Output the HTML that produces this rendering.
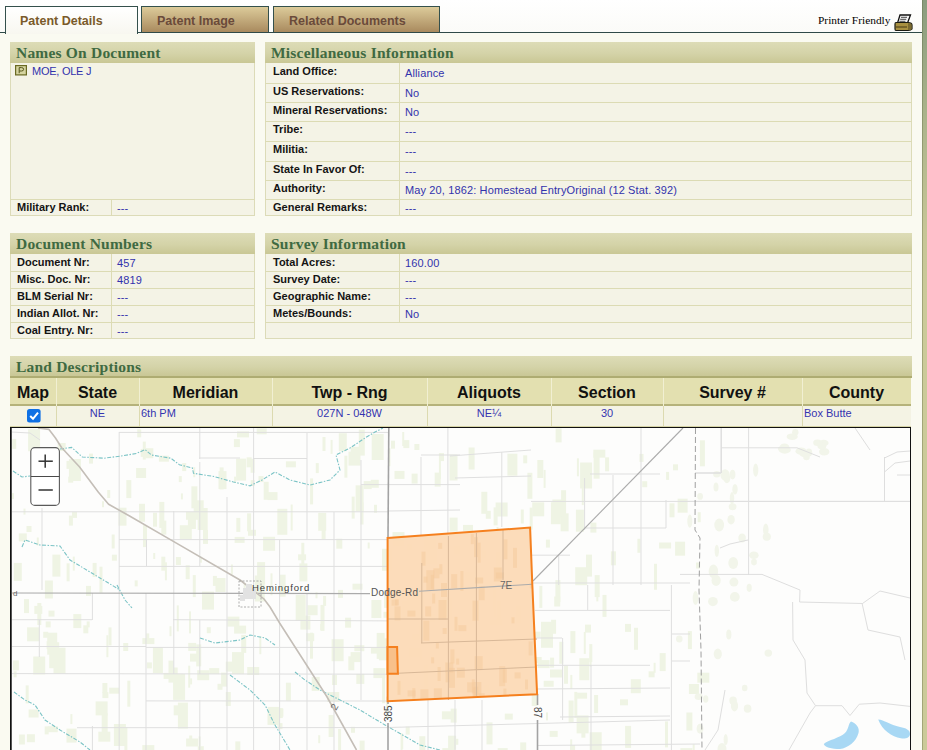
<!DOCTYPE html><html><head><meta charset="utf-8"><style>
*{margin:0;padding:0;box-sizing:border-box}
html,body{width:927px;height:750px;overflow:hidden}
body{background:#fafaf1;font-family:"Liberation Sans",sans-serif;position:relative}
.a{position:absolute;white-space:nowrap}
#top{left:0;top:0;width:922px;height:32px;background:linear-gradient(#ffffff,#fbfbf8)}
#tabline{left:0;top:32px;width:922px;height:1px;background:#2f4a48}
#rbar{left:922px;top:0;width:5px;height:750px;background:linear-gradient(#8a9c7e 0px,#a9b28a 110px,#c6c596 230px,#cbca99 300px,#cbca99);border-left:1px solid rgba(90,100,60,0.35)}
.tab{top:6px;border:1px solid #34504c;border-bottom:none;font-weight:bold;font-size:12.5px;line-height:13px;color:#6a4a3a;padding-top:8px}
.tab.act{background:linear-gradient(#ffffff,#f8f7f0);color:#7a5a2a;height:28px}
.tab.ina{background:linear-gradient(#dccb9a,#a98a5e);height:26px}
#pf{left:818px;top:14px;font-family:"Liberation Serif",serif;font-size:11.4px;line-height:12px;color:#000}
.hdr{height:21px;background:linear-gradient(#dddcb7,#d4d3a8 55%,#c9c795);font-family:"Liberation Serif",serif;font-weight:bold;font-size:15.5px;letter-spacing:0.2px;color:#3f6a42;padding:3px 0 0 6px;line-height:16px}
.bd{background:#f4f3e6;border:1px solid #dcdbb8;border-top:none}
.hl{height:1px;background:#dcdbb4}
.vl{width:1px;background:#dcdbb4}
.l{font-size:11px;line-height:11px;font-weight:bold;color:#141414}
.v{font-size:11px;line-height:11px;color:#3232ac;letter-spacing:0.13px}
.ch{font-size:16px;line-height:16px;font-weight:bold;color:#111;text-align:center}
.dv{font-size:11px;line-height:11px;color:#3434b0}
</style></head><body><div id="top" class="a"></div><div id="tabline" class="a"></div><div id="rbar" class="a"></div>
<div class="a tab act" style="left:5px;width:133px;padding-left:14px">Patent Details</div>
<div class="a tab ina" style="left:141px;width:128px;padding-left:15px">Patent Image</div>
<div class="a tab ina" style="left:273px;width:167px;padding-left:15px">Related Documents</div>
<div id="pf" class="a">Printer Friendly</div>
<svg class="a" style="left:893px;top:13px" width="21" height="19" viewBox="893 13 21 19"><path d="M900,15 L910.5,15 L907.5,23 L897.5,23 Z" fill="#f4f4f4" stroke="#111" stroke-width="1.3"/><g stroke="#333" stroke-width="0.9"><line x1="901" y1="17.3" x2="907" y2="17.3"/><line x1="900.2" y1="19.3" x2="906.2" y2="19.3"/><line x1="899.4" y1="21.3" x2="905.4" y2="21.3"/></g><path d="M896,22.5 L908,22.5 Q912,22.5 912,25 L912,29 Q911,30.5 908,30.5 L896,30.5 Q895,30.5 895,29 L895,24 Q895,22.5 896,22.5 Z" fill="#a89040" stroke="#1a1a10" stroke-width="1.2"/><line x1="896" y1="27" x2="907" y2="27" stroke="#3a3010" stroke-width="0.9"/><path d="M908,23 L911.5,24.5 L911.5,29.5 L908,30" fill="#7a6a30"/></svg>
<div class="a hdr" style="left:10px;top:42px;width:245px">Names On Document</div>
<div class="a bd" style="left:10px;top:63px;width:245px;height:153px"></div>
<svg class="a" style="left:15px;top:65px" width="12" height="11"><rect x="0.6" y="0.6" width="10.8" height="9.3" fill="#d5d4a0" stroke="#6a6a22" stroke-width="1.2"/><path d="M4.2,8.2 L4.2,2.6 L6.6,2.6 Q8.6,2.6 8.6,4.3 Q8.6,6 6.6,6 L4.4,6" fill="none" stroke="#55551a" stroke-width="1"/></svg>
<div class="a v" style="left:32px;top:66px;letter-spacing:-0.25px">MOE, OLE J</div>
<div class="a hl" style="left:10px;top:199px;width:245px"></div>
<div class="a vl" style="left:111px;top:200px;height:16px"></div>
<div class="a l" style="left:17px;top:202px;">Military Rank:</div>
<div class="a v" style="left:117px;top:203px;">---</div>
<div class="a hdr" style="left:265px;top:42px;width:647px">Miscellaneous Information</div>
<div class="a bd" style="left:265px;top:63px;width:647px;height:153px"></div>
<div class="a l" style="left:273px;top:66px;">Land Office:</div>
<div class="a v" style="left:405px;top:68px;">Alliance</div>
<div class="a hl" style="left:265px;top:83px;width:647px"></div>
<div class="a l" style="left:273px;top:86px;">US Reservations:</div>
<div class="a v" style="left:405px;top:88px;">No</div>
<div class="a hl" style="left:265px;top:102px;width:647px"></div>
<div class="a l" style="left:273px;top:105px;">Mineral Reservations:</div>
<div class="a v" style="left:405px;top:107px;">No</div>
<div class="a hl" style="left:265px;top:121px;width:647px"></div>
<div class="a l" style="left:273px;top:124px;">Tribe:</div>
<div class="a v" style="left:405px;top:126px;">---</div>
<div class="a hl" style="left:265px;top:141px;width:647px"></div>
<div class="a l" style="left:273px;top:144px;">Militia:</div>
<div class="a v" style="left:405px;top:146px;">---</div>
<div class="a hl" style="left:265px;top:161px;width:647px"></div>
<div class="a l" style="left:273px;top:164px;">State In Favor Of:</div>
<div class="a v" style="left:405px;top:166px;">---</div>
<div class="a hl" style="left:265px;top:180px;width:647px"></div>
<div class="a l" style="left:273px;top:183px;">Authority:</div>
<div class="a v" style="left:405px;top:185px;">May 20, 1862: Homestead EntryOriginal (12 Stat. 392)</div>
<div class="a hl" style="left:265px;top:199px;width:647px"></div>
<div class="a l" style="left:273px;top:202px;">General Remarks:</div>
<div class="a v" style="left:405px;top:203px;">---</div>
<div class="a vl" style="left:399px;top:63px;height:152px"></div>
<div class="a hdr" style="left:10px;top:233px;width:245px">Document Numbers</div>
<div class="a bd" style="left:10px;top:254px;width:245px;height:85px"></div>
<div class="a l" style="left:17px;top:257px;">Document Nr:</div>
<div class="a v" style="left:117px;top:258px;">457</div>
<div class="a hl" style="left:10px;top:271px;width:245px"></div>
<div class="a l" style="left:17px;top:274px;">Misc. Doc. Nr:</div>
<div class="a v" style="left:117px;top:275px;">4819</div>
<div class="a hl" style="left:10px;top:288px;width:245px"></div>
<div class="a l" style="left:17px;top:291px;">BLM Serial Nr:</div>
<div class="a v" style="left:117px;top:292px;">---</div>
<div class="a hl" style="left:10px;top:305px;width:245px"></div>
<div class="a l" style="left:17px;top:308px;">Indian Allot. Nr:</div>
<div class="a v" style="left:117px;top:309px;">---</div>
<div class="a hl" style="left:10px;top:322px;width:245px"></div>
<div class="a l" style="left:17px;top:325px;">Coal Entry. Nr:</div>
<div class="a v" style="left:117px;top:326px;">---</div>
<div class="a vl" style="left:111px;top:254px;height:84px"></div>
<div class="a hdr" style="left:265px;top:233px;width:647px">Survey Information</div>
<div class="a bd" style="left:265px;top:254px;width:647px;height:85px"></div>
<div class="a l" style="left:273px;top:257px;">Total Acres:</div>
<div class="a v" style="left:405px;top:258px;">160.00</div>
<div class="a hl" style="left:265px;top:271px;width:647px"></div>
<div class="a l" style="left:273px;top:274px;">Survey Date:</div>
<div class="a v" style="left:405px;top:275px;">---</div>
<div class="a hl" style="left:265px;top:288px;width:647px"></div>
<div class="a l" style="left:273px;top:291px;">Geographic Name:</div>
<div class="a v" style="left:405px;top:292px;">---</div>
<div class="a hl" style="left:265px;top:305px;width:647px"></div>
<div class="a l" style="left:273px;top:308px;">Metes/Bounds:</div>
<div class="a v" style="left:405px;top:309px;">No</div>
<div class="a hl" style="left:265px;top:322px;width:647px"></div>
<div class="a vl" style="left:399px;top:254px;height:68px"></div>
<div class="a hdr" style="left:10px;top:356px;width:902px;height:22px;border-bottom:2px solid #aeac72">Land Descriptions</div>
<div class="a" style="left:10px;top:378px;width:901px;height:27px;background:#e3e0b0"></div>
<div class="a" style="left:10px;top:404px;width:901px;height:23px;background:#f4f3e4;border-top:2px solid #b5b27a;border-bottom:1px solid #d6d4a6"></div>
<div class="a ch" style="left:10px;top:385px;width:46px">Map</div>
<div class="a ch" style="left:56px;top:385px;width:83px">State</div>
<div class="a" style="left:56px;top:378px;width:1px;height:28px;background:#f1efd2"></div>
<div class="a" style="left:56px;top:406px;width:1px;height:20px;background:#dcdab0"></div>
<div class="a ch" style="left:139px;top:385px;width:133px">Meridian</div>
<div class="a" style="left:139px;top:378px;width:1px;height:28px;background:#f1efd2"></div>
<div class="a" style="left:139px;top:406px;width:1px;height:20px;background:#dcdab0"></div>
<div class="a ch" style="left:272px;top:385px;width:155px">Twp - Rng</div>
<div class="a" style="left:272px;top:378px;width:1px;height:28px;background:#f1efd2"></div>
<div class="a" style="left:272px;top:406px;width:1px;height:20px;background:#dcdab0"></div>
<div class="a ch" style="left:427px;top:385px;width:124px">Aliquots</div>
<div class="a" style="left:427px;top:378px;width:1px;height:28px;background:#f1efd2"></div>
<div class="a" style="left:427px;top:406px;width:1px;height:20px;background:#dcdab0"></div>
<div class="a ch" style="left:551px;top:385px;width:112px">Section</div>
<div class="a" style="left:551px;top:378px;width:1px;height:28px;background:#f1efd2"></div>
<div class="a" style="left:551px;top:406px;width:1px;height:20px;background:#dcdab0"></div>
<div class="a ch" style="left:663px;top:385px;width:139px">Survey #</div>
<div class="a" style="left:663px;top:378px;width:1px;height:28px;background:#f1efd2"></div>
<div class="a" style="left:663px;top:406px;width:1px;height:20px;background:#dcdab0"></div>
<div class="a ch" style="left:802px;top:385px;width:109px">County</div>
<div class="a" style="left:802px;top:378px;width:1px;height:28px;background:#f1efd2"></div>
<div class="a" style="left:802px;top:406px;width:1px;height:20px;background:#dcdab0"></div>
<svg class="a" style="left:27px;top:409px" width="14" height="14"><rect x="0" y="0" width="13.6" height="13.6" rx="2.5" fill="#0f70e4"/><path d="M3.2,7 L6,9.8 L11,3.6" stroke="#fff" stroke-width="2" fill="none"/></svg>
<div class="a dv" style="left:56px;top:408px;width:83px;text-align:center">NE</div>
<div class="a dv" style="left:141px;top:408px;">6th PM</div>
<div class="a dv" style="left:272px;top:408px;width:155px;text-align:center">027N - 048W</div>
<div class="a dv" style="left:427px;top:408px;width:124px;text-align:center">NE&frac14;</div>
<div class="a dv" style="left:551px;top:408px;width:112px;text-align:center">30</div>
<div class="a dv" style="left:804px;top:408px;">Box Butte</div>
<div class="a" id="map" style="left:10px;top:427px;width:901px;height:323px;overflow:hidden"><svg width="901" height="323" viewBox="10 427 901 323" style="position:absolute;left:0;top:0;display:block"><rect x="10" y="427" width="901" height="323" fill="#fdfdfc"/><g fill="#eff4e4"><rect x="234.1" y="476.6" width="2" height="6"/><rect x="576.9" y="458.3" width="2" height="18"/><rect x="158.9" y="455.7" width="10" height="6"/><rect x="176.8" y="605.4" width="2" height="26"/><rect x="400.6" y="733.1" width="2" height="18"/><rect x="414.4" y="444.0" width="5" height="6"/><rect x="394.5" y="470.9" width="10" height="8"/><rect x="383.5" y="611.8" width="4" height="6"/><rect x="411.7" y="633.7" width="8" height="6"/><rect x="388.4" y="448.2" width="2" height="18"/><rect x="152.9" y="647.1" width="10" height="26"/><rect x="227.4" y="616.6" width="12" height="10"/><rect x="217.5" y="683.8" width="5" height="6"/><rect x="406.8" y="597.1" width="8" height="22"/><rect x="320.2" y="624.1" width="3" height="6"/><rect x="363.7" y="481.1" width="8" height="8"/><rect x="654.0" y="563.8" width="3" height="26"/><rect x="395.5" y="682.1" width="8" height="10"/><rect x="490.1" y="619.4" width="12" height="6"/><rect x="589.7" y="732.2" width="12" height="22"/><rect x="468.6" y="447.5" width="6" height="22"/><rect x="409.2" y="647.4" width="12" height="10"/><rect x="504.8" y="713.6" width="8" height="6"/><rect x="659.1" y="542.5" width="12" height="6"/><rect x="161.3" y="520.6" width="5" height="14"/><rect x="280.4" y="708.6" width="3" height="8"/><rect x="320.5" y="604.9" width="4" height="26"/><rect x="307.6" y="605.2" width="10" height="10"/><rect x="481.4" y="550.5" width="5" height="8"/><rect x="68.2" y="476.7" width="5" height="6"/><rect x="345.1" y="617.7" width="6" height="10"/><rect x="13.8" y="562.9" width="8" height="18"/><rect x="401.2" y="734.9" width="2" height="14"/><rect x="630.8" y="679.2" width="10" height="14"/><rect x="285.9" y="461.3" width="10" height="6"/><rect x="142.3" y="745.1" width="12" height="8"/><rect x="86.7" y="621.4" width="3" height="6"/><rect x="401.5" y="600.8" width="8" height="18"/><rect x="28.6" y="709.5" width="10" height="8"/><rect x="448.1" y="735.7" width="8" height="14"/><rect x="95.6" y="701.4" width="12" height="14"/><rect x="344.4" y="455.7" width="3" height="22"/><rect x="247.1" y="513.3" width="4" height="18"/><rect x="26.9" y="734.2" width="8" height="8"/><rect x="486.5" y="722.4" width="6" height="22"/><rect x="263.7" y="481.8" width="5" height="18"/><rect x="384.1" y="589.9" width="5" height="18"/><rect x="570.1" y="745.1" width="5" height="26"/><rect x="175.9" y="557.0" width="5" height="8"/><rect x="367.7" y="542.5" width="2" height="6"/><rect x="555.4" y="580.1" width="5" height="22"/><rect x="427.9" y="538.9" width="8" height="10"/><rect x="66.5" y="460.9" width="12" height="8"/><rect x="243.7" y="583.4" width="2" height="14"/><rect x="637.4" y="538.8" width="3" height="14"/><rect x="550.0" y="669.5" width="12" height="8"/><rect x="310.0" y="632.7" width="3" height="26"/><rect x="523.2" y="455.3" width="4" height="8"/><rect x="331.6" y="639.2" width="12" height="22"/><rect x="25.7" y="685.4" width="3" height="18"/><rect x="527.4" y="472.8" width="5" height="26"/><rect x="356.3" y="673.9" width="8" height="10"/><rect x="386.1" y="696.6" width="2" height="22"/><rect x="254.8" y="575.5" width="10" height="26"/><rect x="371.7" y="434.0" width="12" height="26"/><rect x="137.2" y="429.3" width="4" height="8"/><rect x="108.5" y="627.4" width="3" height="18"/><rect x="53.5" y="647.7" width="12" height="26"/><rect x="546.0" y="712.4" width="2" height="8"/><rect x="142.8" y="441.6" width="3" height="18"/><rect x="322.5" y="437.0" width="3" height="14"/><rect x="235.3" y="741.4" width="5" height="22"/><rect x="202.0" y="591.6" width="12" height="18"/><rect x="659.7" y="653.1" width="6" height="18"/><rect x="298.1" y="554.3" width="8" height="6"/><rect x="473.4" y="565.9" width="5" height="22"/><rect x="219.6" y="467.4" width="4" height="22"/><rect x="454.3" y="545.9" width="6" height="8"/><rect x="677.6" y="498.7" width="10" height="14"/><rect x="123.2" y="643.0" width="5" height="8"/><rect x="497.7" y="748.1" width="10" height="10"/><rect x="301.3" y="542.8" width="3" height="22"/><rect x="263.1" y="536.8" width="12" height="14"/><rect x="495.5" y="551.8" width="6" height="18"/><rect x="673.0" y="464.3" width="5" height="6"/><rect x="68.9" y="515.6" width="4" height="10"/><rect x="531.7" y="692.0" width="6" height="14"/><rect x="113.9" y="724.0" width="12" height="22"/><rect x="236.3" y="517.9" width="4" height="14"/><rect x="72.0" y="511.9" width="5" height="6"/><rect x="193.2" y="467.2" width="2" height="10"/><rect x="696.1" y="562.5" width="4" height="6"/><rect x="374.0" y="504.8" width="3" height="8"/><rect x="191.4" y="486.3" width="6" height="22"/><rect x="221.1" y="672.6" width="6" height="14"/><rect x="355.6" y="485.3" width="8" height="26"/><rect x="23.5" y="508.6" width="2" height="6"/><rect x="516.1" y="605.4" width="5" height="18"/><rect x="338.1" y="729.0" width="3" height="22"/><rect x="575.2" y="567.2" width="12" height="18"/><rect x="586.0" y="554.6" width="6" height="22"/><rect x="159.3" y="501.9" width="5" height="26"/><rect x="692.7" y="744.2" width="2" height="6"/><rect x="441.9" y="711.3" width="10" height="8"/><rect x="49.2" y="642.2" width="10" height="26"/><rect x="359.6" y="740.6" width="5" height="22"/><rect x="212.9" y="575.9" width="4" height="10"/><rect x="318.2" y="512.8" width="8" height="18"/><rect x="233.9" y="439.1" width="6" height="8"/><rect x="256.7" y="428.3" width="10" height="6"/><rect x="338.0" y="589.9" width="5" height="8"/><rect x="358.8" y="429.6" width="6" height="26"/><rect x="72.8" y="556.6" width="2" height="14"/><rect x="26.5" y="526.0" width="5" height="6"/><rect x="414.5" y="598.4" width="4" height="22"/><rect x="537.6" y="660.1" width="12" height="8"/><rect x="206.8" y="627.2" width="4" height="6"/><rect x="579.3" y="658.2" width="10" height="22"/><rect x="494.0" y="590.8" width="2" height="26"/><rect x="484.0" y="684.9" width="5" height="6"/><rect x="32.5" y="470.9" width="8" height="6"/><rect x="270.5" y="573.3" width="2" height="22"/><rect x="24.0" y="599.1" width="5" height="14"/><rect x="192.8" y="575.1" width="3" height="22"/><rect x="373.4" y="668.1" width="12" height="10"/><rect x="568.6" y="700.5" width="5" height="22"/><rect x="532.2" y="502.3" width="12" height="14"/><rect x="593.6" y="452.7" width="6" height="26"/><rect x="43.2" y="631.8" width="5" height="6"/><rect x="424.2" y="534.8" width="6" height="18"/><rect x="402.2" y="432.0" width="2" height="14"/><rect x="196.2" y="644.4" width="5" height="22"/><rect x="348.3" y="656.3" width="6" height="14"/><rect x="332.0" y="675.0" width="5" height="10"/><rect x="327.2" y="692.0" width="12" height="10"/><rect x="277.5" y="723.1" width="5" height="6"/><rect x="411.6" y="473.6" width="6" height="10"/><rect x="102.4" y="692.1" width="6" height="6"/><rect x="495.6" y="502.5" width="12" height="14"/><rect x="28.1" y="429.2" width="12" height="22"/><rect x="321.6" y="525.2" width="4" height="14"/><rect x="248.0" y="529.8" width="8" height="6"/><rect x="234.6" y="536.9" width="10" height="6"/><rect x="520.8" y="509.5" width="3" height="14"/><rect x="279.8" y="708.1" width="3" height="10"/><rect x="648.6" y="671.3" width="6" height="6"/><rect x="46.6" y="641.2" width="4" height="8"/><rect x="543.7" y="680.8" width="10" height="6"/><rect x="570.4" y="631.1" width="5" height="22"/><rect x="66.5" y="728.6" width="10" height="14"/><rect x="434.7" y="472.6" width="6" height="14"/><rect x="44.7" y="726.4" width="4" height="8"/><rect x="336.3" y="538.7" width="6" height="10"/><rect x="520.2" y="742.4" width="6" height="14"/><rect x="463.0" y="524.9" width="10" height="6"/><rect x="126.3" y="480.1" width="5" height="18"/><rect x="107.2" y="490.0" width="3" height="8"/><rect x="246.6" y="457.3" width="5" height="10"/><rect x="189.0" y="611.4" width="2" height="22"/><rect x="610.9" y="551.3" width="5" height="14"/><rect x="197.2" y="670.2" width="12" height="10"/><rect x="406.7" y="544.0" width="5" height="6"/><rect x="197.7" y="508.0" width="10" height="22"/><rect x="318.2" y="735.2" width="2" height="8"/><rect x="33.2" y="656.5" width="12" height="18"/><rect x="348.5" y="451.6" width="12" height="14"/><rect x="182.2" y="463.1" width="4" height="8"/><rect x="370.9" y="647.6" width="12" height="6"/><rect x="391.0" y="440.7" width="4" height="8"/><rect x="403.3" y="440.1" width="6" height="8"/><rect x="442.6" y="598.1" width="10" height="22"/><rect x="537.3" y="460.0" width="6" height="18"/><rect x="555.6" y="428.4" width="6" height="14"/><rect x="203.0" y="529.9" width="5" height="14"/><rect x="373.6" y="604.1" width="2" height="14"/><rect x="496.5" y="527.0" width="2" height="8"/><rect x="354.3" y="645.2" width="10" height="6"/><rect x="188.2" y="642.9" width="8" height="8"/><rect x="350.6" y="652.1" width="10" height="10"/><rect x="481.3" y="491.8" width="6" height="22"/><rect x="593.3" y="449.7" width="12" height="8"/><rect x="225.8" y="692.0" width="5" height="14"/><rect x="163.6" y="672.9" width="6" height="6"/><rect x="164.9" y="562.3" width="2" height="18"/><rect x="111.9" y="554.7" width="5" height="6"/><rect x="52.4" y="554.6" width="8" height="22"/><rect x="89.0" y="453.6" width="4" height="10"/><rect x="142.4" y="638.1" width="12" height="6"/><rect x="225.8" y="661.6" width="8" height="10"/><rect x="315.8" y="463.1" width="3" height="10"/><rect x="66.6" y="563.3" width="3" height="18"/><rect x="577.1" y="692.7" width="10" height="6"/><rect x="44.9" y="580.5" width="8" height="18"/><rect x="570.3" y="674.9" width="2" height="14"/><rect x="35.0" y="448.2" width="2" height="10"/><rect x="145.3" y="448.2" width="8" height="10"/><rect x="198.6" y="736.4" width="2" height="10"/><rect x="525.3" y="650.0" width="6" height="10"/><rect x="13.6" y="671.3" width="3" height="6"/><rect x="580.1" y="462.5" width="12" height="26"/><rect x="277.3" y="508.8" width="10" height="26"/><rect x="351.0" y="726.8" width="4" height="6"/><rect x="564.0" y="665.8" width="4" height="18"/><rect x="173.7" y="705.3" width="12" height="10"/><rect x="551.1" y="619.8" width="5" height="14"/><rect x="529.7" y="507.6" width="3" height="22"/><rect x="34.3" y="605.9" width="8" height="8"/><rect x="686.4" y="712.5" width="6" height="18"/><rect x="68.9" y="459.0" width="12" height="22"/><rect x="328.6" y="715.0" width="5" height="22"/><rect x="382.1" y="677.2" width="3" height="26"/><rect x="590.4" y="522.6" width="6" height="10"/><rect x="186.0" y="511.8" width="12" height="8"/><rect x="139.0" y="503.8" width="6" height="18"/><rect x="140.7" y="448.9" width="6" height="8"/><rect x="360.5" y="502.5" width="3" height="22"/><rect x="330.6" y="439.9" width="2" height="14"/><rect x="268.6" y="710.4" width="5" height="6"/><rect x="45.7" y="621.4" width="5" height="6"/><rect x="267.5" y="706.9" width="12" height="18"/><rect x="190.1" y="678.4" width="2" height="6"/><rect x="450.2" y="656.5" width="8" height="8"/><rect x="36.8" y="537.5" width="2" height="8"/><rect x="699.9" y="440.3" width="5" height="26"/><rect x="18.8" y="533.4" width="8" height="8"/><rect x="438.9" y="453.1" width="2" height="26"/><rect x="352.5" y="583.7" width="10" height="6"/><rect x="559.3" y="641.8" width="4" height="22"/><rect x="378.9" y="638.3" width="10" height="22"/><rect x="197.8" y="746.2" width="6" height="14"/><rect x="257.1" y="562.1" width="8" height="22"/><rect x="146.9" y="662.4" width="5" height="6"/><rect x="310.1" y="478.4" width="3" height="26"/><rect x="73.3" y="614.1" width="8" height="14"/><rect x="543.6" y="469.9" width="2" height="18"/><rect x="109.2" y="687.7" width="10" height="6"/><rect x="405.7" y="726.6" width="4" height="8"/><rect x="250.7" y="480.1" width="4" height="6"/><rect x="86.0" y="585.9" width="5" height="10"/><rect x="98.3" y="731.7" width="12" height="10"/><rect x="47.8" y="726.2" width="10" height="6"/><rect x="634.0" y="627.8" width="4" height="22"/><rect x="552.4" y="499.5" width="10" height="18"/><rect x="594.1" y="695.0" width="4" height="18"/><rect x="161.3" y="556.7" width="4" height="14"/><rect x="258.5" y="476.1" width="5" height="6"/><rect x="620.0" y="699.3" width="8" height="6"/><rect x="279.6" y="574.7" width="6" height="22"/><rect x="300.4" y="615.6" width="10" height="14"/><rect x="464.9" y="571.9" width="12" height="8"/><rect x="27.1" y="627.3" width="12" height="14"/><rect x="173.1" y="673.9" width="12" height="26"/><rect x="134.7" y="580.4" width="3" height="6"/><rect x="99.5" y="566.7" width="3" height="26"/><rect x="315.5" y="592.3" width="2" height="6"/><rect x="449.5" y="454.5" width="8" height="26"/><rect x="507.4" y="453.7" width="10" height="22"/><rect x="666.1" y="471.9" width="3" height="8"/><rect x="101.7" y="713.2" width="6" height="26"/><rect x="642.2" y="481.2" width="5" height="6"/><rect x="585.0" y="624.6" width="6" height="8"/><rect x="234.1" y="625.6" width="12" height="8"/><rect x="186.1" y="738.5" width="12" height="8"/><rect x="418.8" y="626.3" width="5" height="10"/><rect x="267.5" y="492.1" width="10" height="8"/><rect x="449.6" y="517.6" width="8" height="14"/><rect x="127.3" y="680.7" width="3" height="26"/><rect x="376.7" y="632.9" width="8" height="26"/><rect x="323.1" y="595.9" width="3" height="10"/><rect x="560.6" y="513.3" width="8" height="18"/><rect x="111.7" y="534.5" width="3" height="14"/><rect x="169.5" y="626.2" width="2" height="10"/><rect x="575.9" y="509.7" width="8" height="22"/><rect x="12.2" y="438.9" width="4" height="10"/><rect x="435.5" y="567.2" width="8" height="6"/><rect x="102.0" y="501.2" width="2" height="6"/><rect x="48.5" y="610.6" width="6" height="6"/><rect x="371.4" y="600.0" width="10" height="18"/><rect x="218.5" y="471.1" width="8" height="18"/><rect x="581.8" y="479.1" width="2" height="26"/><rect x="178.8" y="476.1" width="3" height="6"/><rect x="450.7" y="708.6" width="6" height="14"/><rect x="570.2" y="739.4" width="2" height="22"/><rect x="576.6" y="715.4" width="12" height="18"/><rect x="290.7" y="504.5" width="2" height="26"/><rect x="83.3" y="625.3" width="5" height="8"/><rect x="295.7" y="594.9" width="10" height="26"/><rect x="433.5" y="591.8" width="3" height="10"/><rect x="442.3" y="748.1" width="12" height="22"/><rect x="382.0" y="548.8" width="10" height="22"/><rect x="639.5" y="453.9" width="4" height="8"/><rect x="697.7" y="512.2" width="3" height="10"/><rect x="625.1" y="725.9" width="6" height="22"/><rect x="47.2" y="632.7" width="10" height="22"/><rect x="554.2" y="596.5" width="6" height="10"/><rect x="453.3" y="738.8" width="5" height="6"/><rect x="173.7" y="667.5" width="4" height="22"/><rect x="425.2" y="550.2" width="12" height="14"/><rect x="589.6" y="652.6" width="2" height="14"/><rect x="669.5" y="503.3" width="5" height="14"/><rect x="440.0" y="453.1" width="4" height="8"/><rect x="33.7" y="464.0" width="4" height="10"/><rect x="106.4" y="635.2" width="2" height="22"/><rect x="57.7" y="443.0" width="8" height="8"/><rect x="574.3" y="691.9" width="3" height="26"/><rect x="531.7" y="657.0" width="10" height="6"/><rect x="180.9" y="493.4" width="2" height="6"/><rect x="665.0" y="721.4" width="3" height="26"/><rect x="528.7" y="631.6" width="12" height="6"/><rect x="102.4" y="683.0" width="5" height="10"/><rect x="230.9" y="564.5" width="2" height="10"/><rect x="187.9" y="519.0" width="8" height="10"/><rect x="541.0" y="621.8" width="12" height="26"/><rect x="209.2" y="668.1" width="10" height="6"/><rect x="311.7" y="676.9" width="8" height="14"/><rect x="496.5" y="601.2" width="5" height="22"/><rect x="605.1" y="457.3" width="4" height="14"/><rect x="11.9" y="493.1" width="2" height="6"/><rect x="250.6" y="458.8" width="4" height="14"/><rect x="419.3" y="736.2" width="6" height="18"/><rect x="492.9" y="588.5" width="3" height="22"/><rect x="539.3" y="585.9" width="3" height="22"/><rect x="236.1" y="458.6" width="10" height="22"/><rect x="70.4" y="714.1" width="2" height="10"/><rect x="153.0" y="512.7" width="4" height="14"/><rect x="687.9" y="631.1" width="4" height="18"/><rect x="420.3" y="649.9" width="2" height="10"/><rect x="411.7" y="596.0" width="12" height="22"/><rect x="392.5" y="532.1" width="12" height="14"/><rect x="485.8" y="510.8" width="5" height="8"/><rect x="241.2" y="634.9" width="5" height="18"/><rect x="143.0" y="525.1" width="4" height="22"/><rect x="118.5" y="507.7" width="8" height="18"/><rect x="370.8" y="479.8" width="8" height="8"/><rect x="189.2" y="735.5" width="3" height="8"/><rect x="688.9" y="684.0" width="10" height="10"/><rect x="146.2" y="633.4" width="3" height="10"/><rect x="153.2" y="553.0" width="2" height="6"/><rect x="285.9" y="682.7" width="5" height="18"/><rect x="188.2" y="665.7" width="2" height="22"/><rect x="177.9" y="702.6" width="10" height="26"/><rect x="168.5" y="660.6" width="5" height="22"/><rect x="136.1" y="468.0" width="10" height="10"/><rect x="190.0" y="653.6" width="10" height="8"/><rect x="550.1" y="657.6" width="4" height="10"/><rect x="596.3" y="583.4" width="2" height="18"/><rect x="602.5" y="594.9" width="4" height="22"/><rect x="237.0" y="431.4" width="12" height="6"/><rect x="37.3" y="603.0" width="4" height="22"/><rect x="549.7" y="730.9" width="8" height="6"/><rect x="594.7" y="575.1" width="5" height="22"/><rect x="338.8" y="433.2" width="8" height="18"/><rect x="247.2" y="667.0" width="12" height="8"/><rect x="653.6" y="662.8" width="2" height="10"/><rect x="200.0" y="556.7" width="2" height="6"/><rect x="299.4" y="563.4" width="8" height="18"/><rect x="193.7" y="500.3" width="10" height="18"/><rect x="680.4" y="748.1" width="12" height="8"/><rect x="124.4" y="727.3" width="3" height="26"/><rect x="561.1" y="490.2" width="5" height="26"/><rect x="675.1" y="541.7" width="10" height="14"/><rect x="697.3" y="672.7" width="12" height="10"/><rect x="550.9" y="502.2" width="10" height="22"/><rect x="185.7" y="565.2" width="4" height="14"/><rect x="12.9" y="660.4" width="6" height="10"/><rect x="179.8" y="525.2" width="12" height="14"/><rect x="306.2" y="633.2" width="8" height="8"/><rect x="581.4" y="719.7" width="4" height="18"/><rect x="583.8" y="631.9" width="2" height="22"/><rect x="18.9" y="734.5" width="6" height="10"/><rect x="430.1" y="614.3" width="5" height="8"/><rect x="545.9" y="539.6" width="4" height="8"/><rect x="625.0" y="623.9" width="6" height="8"/><rect x="351.7" y="496.6" width="3" height="22"/><rect x="589.3" y="644.1" width="3" height="18"/><rect x="92.6" y="562.9" width="4" height="14"/><rect x="350.7" y="446.8" width="12" height="8"/><rect x="493.6" y="507.4" width="4" height="18"/><rect x="424.1" y="664.5" width="4" height="26"/><rect x="232.0" y="652.1" width="12" height="22"/><rect x="215.5" y="578.0" width="10" height="14"/><rect x="259.3" y="636.2" width="2" height="18"/></g><g fill="#f2f5ea"><ellipse cx="700.0" cy="728.8" rx="3.4" ry="5.0"/><ellipse cx="728.8" cy="634.5" rx="2.6" ry="5.0"/><ellipse cx="700.1" cy="496.4" rx="2.9" ry="3.4"/><ellipse cx="698.7" cy="696.7" rx="4.1" ry="3.2"/><ellipse cx="768.3" cy="653.1" rx="3.8" ry="3.6"/><ellipse cx="716.8" cy="474.2" rx="3.6" ry="3.2"/><ellipse cx="726.9" cy="478.4" rx="3.4" ry="4.8"/><ellipse cx="734.5" cy="705.9" rx="3.6" ry="5.6"/><ellipse cx="695.5" cy="598.1" rx="2.8" ry="7.0"/><ellipse cx="722.0" cy="748.8" rx="4.5" ry="5.8"/><ellipse cx="716.8" cy="550.9" rx="2.2" ry="6.1"/><ellipse cx="733.9" cy="582.1" rx="4.5" ry="4.5"/><ellipse cx="755.7" cy="470.2" rx="2.6" ry="6.6"/><ellipse cx="712.9" cy="601.6" rx="4.9" ry="4.6"/><ellipse cx="744.7" cy="688.0" rx="2.8" ry="3.3"/><ellipse cx="733.2" cy="563.1" rx="4.9" ry="6.0"/><ellipse cx="732.0" cy="498.3" rx="2.2" ry="6.2"/><ellipse cx="731.1" cy="519.7" rx="3.7" ry="4.8"/><ellipse cx="732.6" cy="506.7" rx="3.9" ry="3.5"/><ellipse cx="749.2" cy="587.8" rx="2.6" ry="4.1"/><ellipse cx="753.9" cy="555.2" rx="4.7" ry="3.8"/><ellipse cx="716.1" cy="580.4" rx="4.6" ry="5.6"/><ellipse cx="765.8" cy="529.7" rx="2.8" ry="6.1"/><ellipse cx="754.0" cy="562.1" rx="2.9" ry="3.3"/><ellipse cx="742.1" cy="538.0" rx="3.8" ry="4.5"/><ellipse cx="734.8" cy="596.9" rx="4.9" ry="4.9"/><ellipse cx="689.8" cy="521.2" rx="2.5" ry="6.6"/><ellipse cx="705.7" cy="699.0" rx="2.7" ry="3.8"/><ellipse cx="719.2" cy="525.0" rx="4.9" ry="6.5"/><ellipse cx="679.3" cy="639.0" rx="3.3" ry="3.4"/><ellipse cx="766.8" cy="536.8" rx="4.1" ry="4.0"/><ellipse cx="733.1" cy="700.6" rx="3.8" ry="4.2"/><ellipse cx="735.0" cy="489.3" rx="2.7" ry="5.2"/><ellipse cx="747.6" cy="708.7" rx="3.8" ry="4.1"/><ellipse cx="732.6" cy="474.6" rx="2.8" ry="4.8"/><ellipse cx="716.0" cy="486.9" rx="2.5" ry="4.5"/><ellipse cx="713.4" cy="571.4" rx="4.7" ry="6.9"/><ellipse cx="717.8" cy="653.9" rx="4.1" ry="5.3"/><ellipse cx="725.1" cy="475.0" rx="4.7" ry="5.8"/><ellipse cx="725.7" cy="739.6" rx="2.1" ry="5.5"/><ellipse cx="808.9" cy="452.5" rx="3.3" ry="4.0"/><ellipse cx="784.5" cy="447.3" rx="4.9" ry="3.8"/><ellipse cx="824.2" cy="451.7" rx="5.2" ry="3.8"/><ellipse cx="801.1" cy="451.2" rx="5.6" ry="3.7"/><ellipse cx="805.0" cy="454.1" rx="5.5" ry="3.1"/><ellipse cx="817.5" cy="442.7" rx="4.3" ry="3.2"/><ellipse cx="784.8" cy="449.9" rx="6.0" ry="3.8"/><ellipse cx="823.7" cy="442.9" rx="4.9" ry="3.2"/><ellipse cx="806.4" cy="455.5" rx="2.3" ry="3.5"/><ellipse cx="781.8" cy="448.8" rx="3.9" ry="2.5"/><ellipse cx="821.9" cy="445.9" rx="4.5" ry="3.8"/><ellipse cx="795.3" cy="432.3" rx="3.2" ry="3.4"/><ellipse cx="792.2" cy="436.7" rx="5.6" ry="3.3"/><ellipse cx="806.5" cy="457.0" rx="3.3" ry="3.3"/></g><g stroke="#dfdfdf" stroke-width="1" fill="none"><line x1="11" y1="511.8" x2="388" y2="511.8"/><line x1="119" y1="432.4" x2="388" y2="432.4"/><line x1="119" y1="539.6" x2="417" y2="539.6"/><line x1="119" y1="566.4" x2="388" y2="566.4"/><line x1="199" y1="458" x2="240" y2="458"/><line x1="253" y1="458.5" x2="307" y2="458.5"/><line x1="421" y1="455" x2="460" y2="455"/><line x1="388" y1="484.6" x2="460" y2="484.6"/><line x1="361" y1="484.6" x2="389" y2="484.6"/><line x1="388" y1="511" x2="460" y2="510"/><line x1="11" y1="619.7" x2="92" y2="619.7"/><line x1="173" y1="619.7" x2="388" y2="620.9"/><line x1="11" y1="646.5" x2="146" y2="646.5"/><line x1="146" y1="647.4" x2="388" y2="647.4"/><line x1="11" y1="673.6" x2="388" y2="674.2"/><line x1="146" y1="700.9" x2="388" y2="701"/><line x1="77" y1="727.7" x2="388" y2="727.6"/><line x1="450" y1="456" x2="531" y2="450"/><line x1="455" y1="478" x2="531" y2="476"/><line x1="531" y1="501.4" x2="910" y2="501.4"/><line x1="584" y1="528" x2="666" y2="528"/><line x1="531" y1="555.2" x2="570" y2="555.2"/><line x1="590" y1="474" x2="660" y2="474"/><line x1="533" y1="583" x2="690" y2="583"/><line x1="680" y1="501.4" x2="910" y2="501.4"/><line x1="721" y1="447.8" x2="797" y2="447.8"/><line x1="797" y1="447.8" x2="820" y2="457"/><line x1="695" y1="473" x2="721" y2="473"/><line x1="535" y1="610.4" x2="670" y2="610.4"/><line x1="535" y1="638" x2="562" y2="638"/><line x1="536" y1="665.3" x2="650" y2="665.3"/><line x1="536" y1="689" x2="670" y2="688"/><line x1="560" y1="717" x2="670" y2="716"/><line x1="388" y1="727.5" x2="670" y2="720"/><line x1="537" y1="745.5" x2="700" y2="744"/><line x1="672" y1="634" x2="690" y2="634"/><line x1="672" y1="661" x2="690" y2="661"/><line x1="388" y1="619" x2="448" y2="619"/><line x1="421" y1="643" x2="537" y2="639"/><line x1="388" y1="673.7" x2="537" y2="667"/><line x1="119.2" y1="432" x2="119.2" y2="750"/><line x1="42" y1="508" x2="42" y2="590"/><line x1="146.5" y1="539" x2="146.5" y2="566"/><line x1="173.8" y1="511" x2="173.8" y2="674"/><line x1="199.8" y1="428" x2="199.8" y2="459"/><line x1="199.8" y1="462" x2="199.8" y2="566"/><line x1="227" y1="497" x2="227" y2="750"/><line x1="39.3" y1="620" x2="39.3" y2="657"/><line x1="92.4" y1="593" x2="92.4" y2="620"/><line x1="92.4" y1="726" x2="92.4" y2="750"/><line x1="146" y1="593" x2="146" y2="750"/><line x1="199.8" y1="620" x2="199.8" y2="674"/><line x1="199.8" y1="700" x2="199.8" y2="750"/><line x1="253.6" y1="428" x2="253.6" y2="750"/><line x1="307" y1="433" x2="307" y2="540"/><line x1="334" y1="512" x2="334" y2="750"/><line x1="361" y1="460" x2="361" y2="700"/><line x1="421" y1="457" x2="421" y2="540"/><line x1="447.9" y1="428" x2="447.9" y2="540"/><line x1="279.6" y1="540" x2="279.6" y2="750"/><line x1="307" y1="593" x2="307" y2="750"/><line x1="501.8" y1="452" x2="501.8" y2="527"/><line x1="584.6" y1="478" x2="584.6" y2="530"/><line x1="613" y1="475" x2="613" y2="585"/><line x1="641" y1="428" x2="641" y2="585"/><line x1="666" y1="500" x2="666" y2="528"/><line x1="558.7" y1="555" x2="558.7" y2="585"/><line x1="721.4" y1="428" x2="721.4" y2="473"/><line x1="748.6" y1="428" x2="748.6" y2="575"/><line x1="884.5" y1="457" x2="884.5" y2="501"/><line x1="587.7" y1="585" x2="587.7" y2="610"/><line x1="562.6" y1="638" x2="562.6" y2="720"/><line x1="591" y1="665" x2="591" y2="750"/><line x1="671.4" y1="585" x2="671.4" y2="750"/><line x1="482" y1="700" x2="482" y2="750"/><line x1="455" y1="700" x2="455" y2="750"/><line x1="428" y1="700" x2="428" y2="750"/><line x1="421.8" y1="563" x2="421.8" y2="643"/><line x1="448.4" y1="536" x2="448.4" y2="700"/><line x1="476.4" y1="533" x2="476.4" y2="698"/><line x1="503" y1="530" x2="503" y2="580"/></g><g stroke="#dedede" stroke-width="1" fill="none"><polyline points="680,574.4 762,574.4 800,590 799.6,602 862.5,603.5 880,591 910,598"/><polyline points="792.6,602 793,640 805,660 807,693 815.5,705.7 842,705.7 850,715.5 859.3,704.2 880,703 910,706.4"/><polyline points="815.5,705.7 810,713 789,750"/><polyline points="862,603 868,630 900,637 905,660"/><polyline points="725,690 718,730 705,750"/><polyline points="855,428 870,450"/><polyline points="884.5,457 884.5,501"/><polyline points="884.5,458 897,452 910,451"/><polyline points="884.5,472 895,463 910,461"/><polyline points="897,475 910,475"/><polyline points="720,548 730,544 748,540"/><polyline points="721,428 721,473 695,473"/></g><g stroke="#7cc4c6" stroke-width="1.1" fill="none" stroke-dasharray="4 1.5 1.5 1.5"><polyline points="60,449 71.6,447.4 82.4,457 104,458.2 121.2,456 136.3,453.5 145,449.6 151.4,455 170.8,458.2 179.4,464.7 192.4,468 193.5,473.3 214,476.5 233.4,482 250,485.8 262,480 275,472 290,480 310,485 330,480 340,470 336,455 350,448 365,438 375,432 383,428"/><polyline points="13,471 22,477 30,476"/><polyline points="22,547 25,540 40,545 60,546 70,560 100,578 120,590"/><polyline points="14,692 25,700 35,705 45,720 60,730 80,742 90,750"/><polyline points="117,585 125,600 132,608"/><polyline points="200,638 215,643 240,640 250,635 265,638 275,645"/><polyline points="230,675 250,690 265,705 275,725 290,750"/><polyline points="295,672 305,680 320,690 340,700 360,710 385,725 420,745 440,750"/></g><g fill="#a8d8f4"><path d="M851,721.5 C856,723 860,728 858.5,733 C856,742 848,748 840,749 C832,749 824,747 823.8,744 C828,740 840,738 845,733 C849,729 848,724 851,721.5 Z"/><path d="M878.2,719.6 C884,720 890,725 900,727 C906,728 910,730 910,734 C910,738 905,739 900.8,738.2 C892,737 882,730 878.2,719.6 Z"/></g><path d="M387.6,538 L530.1,527.6 L532.3,584.2 L537.1,694.2 L387.6,701.2 Z" fill="#fcdab6" fill-opacity="0.95"/><clipPath id="pc"><path d="M387.6,538 L530.1,527.6 L532.3,584.2 L537.1,694.2 L387.6,701.2 Z"/></clipPath><g fill="#f5c898" fill-opacity="0.45" clip-path="url(#pc)"><rect x="423.3" y="620.7" width="6" height="20"/><rect x="477.6" y="542.7" width="3" height="20"/><rect x="426.3" y="570.2" width="8" height="20"/><rect x="445.6" y="672.3" width="4" height="10"/><rect x="511.5" y="617.3" width="3" height="6"/><rect x="412.3" y="688.1" width="3" height="14"/><rect x="499.2" y="666.2" width="6" height="20"/><rect x="473.3" y="682.0" width="8" height="20"/><rect x="445.3" y="662.5" width="8" height="10"/><rect x="513.0" y="547.9" width="4" height="20"/><rect x="420.4" y="689.4" width="8" height="14"/><rect x="449.0" y="667.9" width="6" height="20"/><rect x="471.8" y="679.4" width="3" height="14"/><rect x="528.7" y="641.4" width="4" height="14"/><rect x="525.0" y="679.5" width="3" height="10"/><rect x="478.6" y="693.1" width="6" height="14"/><rect x="407.4" y="610.6" width="8" height="6"/><rect x="438.2" y="542.9" width="4" height="6"/><rect x="431.1" y="657.3" width="3" height="6"/><rect x="474.7" y="656.1" width="8" height="14"/><rect x="467.1" y="682.3" width="6" height="10"/><rect x="529.8" y="582.5" width="3" height="6"/><rect x="474.0" y="537.1" width="4" height="20"/><rect x="430.8" y="574.9" width="3" height="14"/><rect x="433.9" y="688.3" width="8" height="20"/><rect x="454.5" y="616.8" width="3" height="14"/><rect x="450.4" y="649.4" width="4" height="14"/><rect x="451.2" y="574.1" width="6" height="14"/><rect x="391.6" y="599.7" width="6" height="6"/><rect x="442.7" y="628.0" width="4" height="6"/><rect x="478.7" y="586.2" width="6" height="14"/><rect x="475.2" y="577.5" width="8" height="6"/><rect x="472.5" y="687.6" width="3" height="14"/><rect x="425.2" y="606.4" width="6" height="10"/><rect x="441.0" y="583.0" width="6" height="14"/><rect x="432.1" y="593.5" width="3" height="10"/><rect x="433.4" y="568.3" width="6" height="10"/><rect x="435.9" y="642.5" width="3" height="6"/><rect x="474.1" y="686.7" width="4" height="20"/><rect x="503.4" y="688.6" width="3" height="14"/><rect x="493.9" y="567.5" width="8" height="14"/><rect x="421.5" y="551.7" width="4" height="14"/><rect x="502.9" y="668.7" width="4" height="14"/><rect x="437.6" y="667.0" width="3" height="14"/><rect x="472.5" y="600.7" width="6" height="20"/><rect x="438.5" y="600.0" width="8" height="20"/><rect x="395.0" y="599.4" width="4" height="6"/><rect x="456.8" y="667.7" width="8" height="10"/><rect x="394.5" y="606.4" width="6" height="14"/><rect x="514.6" y="672.4" width="6" height="6"/><rect x="503.4" y="539.3" width="4" height="20"/><rect x="470.8" y="534.1" width="3" height="10"/><rect x="460.4" y="571.0" width="3" height="20"/><rect x="397.5" y="680.8" width="3" height="14"/><rect x="407.6" y="690.4" width="8" height="6"/><rect x="439.3" y="564.2" width="3" height="10"/><rect x="423.5" y="576.6" width="4" height="6"/><rect x="458.3" y="625.1" width="8" height="6"/><rect x="495.9" y="572.5" width="8" height="6"/><rect x="456.2" y="658.6" width="3" height="6"/></g><g stroke="#d8b898" stroke-width="1"><line x1="421.8" y1="563" x2="421.8" y2="643"/><line x1="448.4" y1="536" x2="448.4" y2="700"/><line x1="476.4" y1="533" x2="476.4" y2="698"/><line x1="503" y1="530" x2="503" y2="580"/><line x1="388" y1="619" x2="448" y2="619"/><line x1="421" y1="643" x2="537" y2="639"/><line x1="388" y1="673.7" x2="537" y2="667"/></g><g stroke="#ababab" stroke-width="1.1" fill="none"><polyline points="11,593 370,593.6"/><polyline points="419,591.2 532.3,584.2"/><polyline points="533,581 683,428"/></g><g stroke="#a3a3a3" stroke-width="1.6" fill="none"><polyline points="388.8,428 388,538"/><polyline points="388,701 388,704"/><polyline points="388,723 388,750"/><polyline points="537.5,694 537.5,705"/><polyline points="537.5,720 537.5,750"/></g><polyline points="38,428 49,429.4 55.3,437.7 61.7,447.8 79.4,466.8 98.4,492.2 108.6,504.2 130,516.3 173.8,541.6 240,580 257.3,593.6 264,599 270,607 279.6,623 326.8,696.5 356.5,750" stroke="#c4beb7" stroke-width="1.6" fill="none" stroke-linejoin="round"/><polyline points="11,432 30,433 40,440" stroke="#e0e0e0" stroke-width="1" fill="none"/><polyline points="695.5,428 695,530 700,538 699,590 701,650 702,750" stroke="#a0a0a0" stroke-width="1" fill="none" stroke-dasharray="6 3"/><path d="M387.6,538 L530.1,527.6 L532.3,584.2 L537.1,694.2 L387.6,701.2 Z" fill="none" stroke="#f5801f" stroke-width="2"/><path d="M387.6,647.1 L397.1,647.1 L397.9,673.7 L387.6,673.7 Z" fill="#f8c08a" stroke="#f5801f" stroke-width="2"/><rect x="239" y="581" width="22" height="26" fill="none" stroke="#999" stroke-width="0.8" stroke-dasharray="2 1.5"/><g fill="#e2e2e2"><rect x="243" y="588" width="13" height="11"/><rect x="246" y="584" width="6" height="5"/><rect x="240" y="595" width="5" height="6"/></g><g font-family="Liberation Sans" font-size="10" fill="#333"><text x="252" y="591" letter-spacing="0.9" font-size="9.5" fill="#3c3c3c">Hemingford</text><text x="371" y="596" fill="#555" letter-spacing="0.2">Dodge-Rd</text><text x="500" y="589" fill="#666">7E</text><text transform="translate(392,722) rotate(-90)" fill="#444">385</text><text transform="translate(534,707) rotate(90)" fill="#444">87</text><text transform="translate(336,711) rotate(-60)" fill="#666">2</text><text transform="translate(13,596)" fill="#666" font-size="8">d</text></g><rect x="30.8" y="447.6" width="28.6" height="57.8" rx="4" fill="#fff" stroke="#5a5a5a" stroke-width="1.1"/><line x1="30.8" y1="476.5" x2="59.4" y2="476.5" stroke="#4a4a4a" stroke-width="1"/><g stroke="#333" stroke-width="1.5"><line x1="38.5" y1="461.2" x2="52.8" y2="461.2"/><line x1="45.2" y1="454.4" x2="45.2" y2="467.8"/><line x1="38.5" y1="490" x2="52.8" y2="490"/></g><rect x="10.5" y="427.5" width="900" height="330" fill="none" stroke="#111" stroke-width="1"/><line x1="11.5" y1="428" x2="11.5" y2="750" stroke="#555" stroke-width="1"/></svg></div></body></html>
